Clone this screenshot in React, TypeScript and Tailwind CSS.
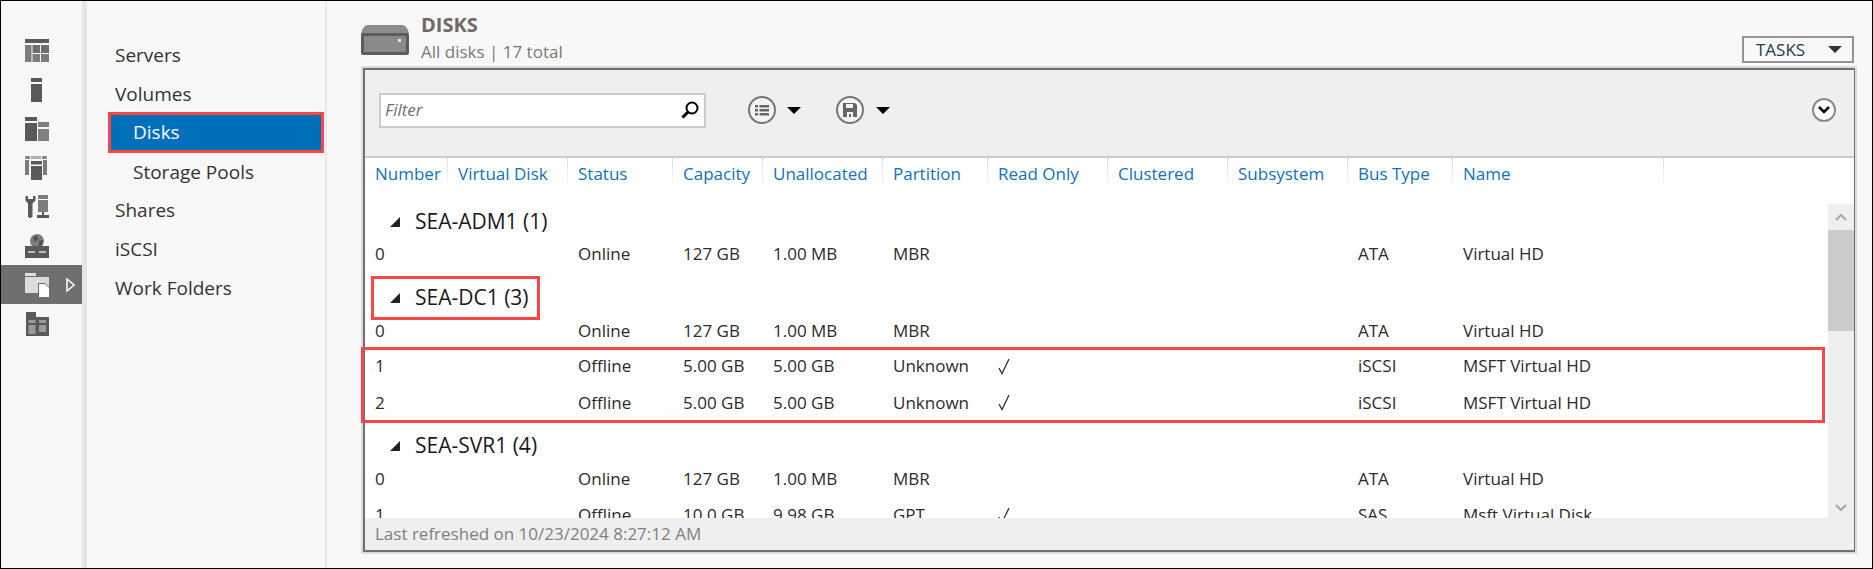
import React from 'react';

const font = { fontFamily: '"Open Sans", "Noto Sans", sans-serif' };

// Rail icons, all drawn on the 24x24 grid the originals sit on
function TableIcon() {
  return (
    <svg width="24" height="24" viewBox="0 0 24 24">
      <rect x="0" y="0" width="24" height="4" fill="#5a5a5a" />
      <rect x="0" y="6" width="6.5" height="17" fill="#7c7c7c" />
      <rect x="7.5" y="6" width="7.5" height="8" fill="#6e6e6e" />
      <rect x="16" y="6" width="8" height="8" fill="#6e6e6e" />
      <rect x="7.5" y="15" width="7.5" height="8" fill="#7c7c7c" />
      <rect x="16" y="15" width="8" height="8" fill="#7c7c7c" />
    </svg>
  );
}

function ServerIcon() {
  return (
    <svg width="24" height="24" viewBox="0 0 24 24">
      <rect x="6" y="0" width="11" height="4" fill="#5a5a5a" />
      <rect x="6" y="6" width="11" height="18" fill="#5a5a5a" />
    </svg>
  );
}

function RolesIcon() {
  return (
    <svg width="24" height="24" viewBox="0 0 24 24">
      <rect x="0" y="0" width="12" height="4" fill="#5a5a5a" />
      <rect x="0" y="6" width="12" height="18" fill="#5a5a5a" />
      <rect x="13" y="5" width="11" height="5" fill="#808080" />
      <rect x="13" y="12" width="11" height="12" fill="#808080" />
    </svg>
  );
}

function GroupIcon() {
  return (
    <svg width="24" height="24" viewBox="0 0 24 24">
      <rect x="0" y="0" width="5" height="3" fill="#8a8a8a" />
      <rect x="0" y="4" width="4" height="15" fill="#7c7c7c" />
      <rect x="17" y="0" width="5" height="3" fill="#8a8a8a" />
      <rect x="18" y="4" width="4" height="15" fill="#7c7c7c" />
      <rect x="6" y="0" width="10" height="3" fill="#b0b0b0" />
      <rect x="6" y="5" width="11" height="3.5" fill="#5a5a5a" />
      <rect x="6" y="10" width="11" height="14" fill="#5a5a5a" />
    </svg>
  );
}

function ToolsIcon() {
  return (
    <svg width="24" height="24" viewBox="0 0 24 24">
      <path d="M0.500 1 L0.500 5.500 L3 8.500 L3 21.500 Q5 24.500 7.500 21.500 L7.500 8.500 L10.500 5.500 L10.500 1 L8 1 L8 4 L3 4 L3 1 Z" fill="#5a5a5a" />
      <rect x="13" y="0" width="10" height="4" fill="#7c7c7c" />
      <rect x="13" y="5" width="10" height="12" fill="#7c7c7c" />
      <rect x="17" y="17" width="2" height="3" fill="#5a5a5a" />
      <rect x="12" y="20" width="12" height="3" fill="#5a5a5a" />
    </svg>
  );
}

function GlobeIcon() {
  return (
    <svg width="24" height="24" viewBox="0 0 24 24">
      <circle cx="12" cy="7" r="7" fill="#7c7c7c" />
      <path d="M8 3 L12 2 L13 5 L10 8 Z M14 7 L18 6 L17 11 L14 12 Z" fill="#4f4f4f" />
      <rect x="0" y="12" width="24" height="12" fill="#5a5a5a" />
      <rect x="3" y="17" width="7" height="2" fill="#bdbdbd" />
      <rect x="14" y="17" width="7" height="2" fill="#bdbdbd" />
    </svg>
  );
}

function SharesIcon() {
  return (
    <svg width="24" height="24" viewBox="0 0 24 24">
      <rect x="0" y="0" width="11" height="3" fill="#e0e0e0" />
      <rect x="0" y="4" width="24" height="16" fill="#dcdcdc" />
      <path d="M13 10 L20 10 L24 14 L24 24 L13 24 Z" fill="#6f6f6f" />
      <path d="M14 11 L20 11 L24 15 L24 24 L14 24 Z" fill="#ffffff" />
    </svg>
  );
}

function QuotaIcon() {
  return (
    <svg width="24" height="24" viewBox="0 0 24 24">
      <path d="M1 0 L11 0 L11 5 L24 5 L24 24 L1 24 Z" fill="#5a5a5a" />
      <rect x="3.500" y="8" width="7" height="3" fill="#9a9a9a" />
      <rect x="3.500" y="13" width="7" height="9" fill="#9a9a9a" />
      <rect x="14" y="8" width="7" height="3" fill="#9a9a9a" />
      <rect x="14" y="13" width="7" height="7" fill="#9a9a9a" />
    </svg>
  );
}

function DiskIcon() {
  return (
    <svg width="48" height="30" viewBox="0 0 48 30">
      <path d="M6 0 L42 0 Q47 2 48 9 L0 9 Q1 2 6 0 Z" fill="#8d8d8d" />
      <rect x="0" y="8" width="48" height="22" rx="2" fill="#5c5c5c" />
      <rect x="3" y="11" width="42" height="16" rx="1" fill="#8a8a8a" />
      <rect x="37" y="14" width="3" height="3" fill="#e6e6e6" />
    </svg>
  );
}

function Caret({ className }: { className: string }) {
  return <div className={`h-0 w-0 border-x-[7px] border-t-[7px] border-x-transparent ${className}`} />;
}

function RoundButton({ children }: { children: React.ReactNode }) {
  return (
    <div className="flex h-[28px] w-[28px] items-center justify-center rounded-full border-2 border-[#777777] bg-[#f4f4f4]">
      {children}
    </div>
  );
}

function Check() {
  return (
    <svg width="12" height="17" viewBox="0 0 12 17" fill="none" stroke="#333333" strokeWidth="1.3">
      <path d="M1 10 L4 15.500 L11 1" />
    </svg>
  );
}

const railIcons = [TableIcon, ServerIcon, RolesIcon, GroupIcon, ToolsIcon, GlobeIcon, SharesIcon, QuotaIcon];

const navItems = [
  { label: 'Servers' },
  { label: 'Volumes' },
  { label: 'Disks', sub: true, active: true },
  { label: 'Storage Pools', sub: true },
  { label: 'Shares' },
  { label: 'iSCSI' },
  { label: 'Work Folders' },
];

const columns = [
  { label: 'Number', w: 'w-[83px]' },
  { label: 'Virtual Disk', w: 'w-[120px]' },
  { label: 'Status', w: 'w-[105px]' },
  { label: 'Capacity', w: 'w-[90px]' },
  { label: 'Unallocated', w: 'w-[120px]' },
  { label: 'Partition', w: 'w-[105px]' },
  { label: 'Read Only', w: 'w-[120px]' },
  { label: 'Clustered', w: 'w-[120px]' },
  { label: 'Subsystem', w: 'w-[120px]' },
  { label: 'Bus Type', w: 'w-[105px]' },
  { label: 'Name', w: 'w-[211px]' },
];

type Disk = { num: string; status: string; cap: string; free: string; part: string; ro?: boolean; bus: string; name: string };

function DiskRow({ d, h = 'h-[36px]' }: { d: Disk; h?: string }) {
  return (
    <div className={`flex shrink-0 items-center text-[17px] text-[#2b2b2b] ${h}`}>
      <div className="w-[83px] pl-[10px]">{d.num}</div>
      <div className="w-[120px]" />
      <div className="w-[105px] pl-[10px]">{d.status}</div>
      <div className="w-[90px] pl-[10px]">{d.cap}</div>
      <div className="w-[120px] pl-[10px]">{d.free}</div>
      <div className="w-[105px] pl-[10px]">{d.part}</div>
      <div className="w-[120px] pl-[10px]">{d.ro && <Check />}</div>
      <div className="w-[120px]" />
      <div className="w-[120px]" />
      <div className="w-[105px] pl-[10px]">{d.bus}</div>
      <div className="pl-[10px]">{d.name}</div>
    </div>
  );
}

function GroupHeader({ label }: { label: string }) {
  return (
    <div className="flex h-[33px] shrink-0 items-center gap-[15px] pl-[25px] text-[21px] text-[#1a1a1a]">
      <svg width="10" height="10" viewBox="0 0 10 10">
        <path d="M10 0 L10 10 L0 10 Z" fill="#222222" />
      </svg>
      <span>{label}</span>
    </div>
  );
}

const mbr = { status: 'Online', cap: '127 GB', free: '1.00 MB', part: 'MBR', bus: 'ATA', name: 'Virtual HD' };
const iscsi = { status: 'Offline', cap: '5.00 GB', free: '5.00 GB', part: 'Unknown', ro: true, bus: 'iSCSI', name: 'MSFT Virtual HD' };

export default function App() {
  return (
    <div style={font} className="flex h-[569px] w-[1873px] overflow-hidden border border-black bg-[#f8f8f8]">
      {/* Icon rail */}
      <div className="flex w-[81px] shrink-0 flex-col pt-[30px]">
        {railIcons.map((Icon, i) => (
          <div key={i} className={`flex h-[39px] items-center pl-[24px] ${i === 6 ? 'bg-[#6f6f6f]' : ''}`}>
            <Icon />
            {i === 6 && (
              <svg className="ml-[17px]" width="9" height="14" viewBox="0 0 9 14" fill="none" stroke="#ffffff" strokeWidth="1.500">
                <path d="M1 1 L8 7 L1 13 Z" />
              </svg>
            )}
          </div>
        ))}
      </div>
      <div className="w-[5px] shrink-0 bg-[#e6e6e6]" />

      {/* Section nav */}
      <div className="flex w-[240px] shrink-0 flex-col border-r-2 border-[#e9e9e9] pt-[35px] text-[19px] text-[#333333]">
        {navItems.map((item) =>
          item.active ? (
            <div key={item.label} className="-mt-[1.4px] ml-[21px] mr-[1px] flex h-[41px] shrink-0 items-center border-[3px] border-[#fb4646] bg-[#0070bb] pl-[22px] text-white">
              {item.label}
            </div>
          ) : (
            <div key={item.label} className={`flex h-[38.6px] shrink-0 items-center ${item.sub ? 'pl-[46px]' : 'pl-[28px]'}`}>
              {item.label}
            </div>
          ),
        )}
      </div>

      {/* Main */}
      <div className="flex min-w-0 flex-1 flex-col pl-[36px] pr-[17px]">
        <div className="flex h-[67px] shrink-0 items-start">
          <div className="-ml-[2px] mt-[24px]">
            <DiskIcon />
          </div>
          <div className="ml-[12px] mt-[12px] flex-1">
            <div className="text-[20px] font-bold leading-[24px] text-[#6f6a66]">DISKS</div>
            <div className="text-[17px] leading-[30px] text-[#7a7a7a]">All disks | 17 total</div>
          </div>
          <div className="mr-[1px] mt-[35px] flex h-[27px] w-[112px] items-center border-2 border-[#949494] bg-[#f8f8f8] pl-[12px] text-[17px] text-[#2d3a4c]">
            <span className="flex-1">TASKS</span>
            <Caret className="mr-[10px] border-t-[#333333]" />
          </div>
        </div>

        {/* Panel */}
        <div className="relative flex h-[484px] flex-col border-2 border-r border-[#6f6f6f] shadow-[0_0_0_2px_#dcdcdc]">
          <div className="flex h-[86px] shrink-0 items-center bg-[#efefef] pb-[6px] pl-[14px] pr-[18px]">
            <div className="flex h-[35px] w-[327px] items-center border-2 border-[#cccccc] bg-white pl-[4px] pr-[5px]">
              <span className="flex-1 text-[17px] italic text-[#6f6f6f]">Filter</span>
              <svg width="18" height="18" viewBox="0 0 18 18" fill="none" stroke="#000000">
                <circle cx="11" cy="7" r="5.500" strokeWidth="2" />
                <path d="M7 11 L1.500 16.500" strokeWidth="3" />
              </svg>
            </div>
            <div className="ml-[42px] flex items-center gap-[11px]">
              <RoundButton>
                <svg width="14" height="13" viewBox="0 0 14 13" fill="#666666">
                  <rect x="0" y="1" width="3" height="2.500" />
                  <rect x="4.500" y="1" width="9.500" height="2.500" />
                  <rect x="0" y="5" width="3" height="2.500" />
                  <rect x="4.500" y="5" width="9.500" height="2.500" />
                  <rect x="0" y="9" width="3" height="2.500" />
                  <rect x="4.500" y="9" width="9.500" height="2.500" />
                </svg>
              </RoundButton>
              <Caret className="border-t-black" />
            </div>
            <div className="ml-[35px] flex items-center gap-[12px]">
              <RoundButton>
                <svg width="14" height="14" viewBox="0 0 14 14">
                  <path d="M0 0 L12 0 L14 2 L14 14 L0 14 Z" fill="#666666" />
                  <rect x="3" y="1" width="7" height="4" fill="#f4f4f4" />
                  <rect x="4" y="9" width="6" height="5" fill="#f4f4f4" />
                  <rect x="6" y="11" width="2" height="3" fill="#666666" />
                </svg>
              </RoundButton>
              <Caret className="border-t-black" />
            </div>
            <div className="ml-auto flex h-[24px] w-[24px] items-center justify-center rounded-full border-2 border-[#8a8a8a] bg-white">
              <svg width="12" height="8" viewBox="0 0 12 8" fill="none" stroke="#000000" strokeWidth="2.500">
                <path d="M1 1 L6 6 L11 1" />
              </svg>
            </div>
          </div>

          <div className="flex min-h-0 flex-1 flex-col border-t-2 border-[#cccccc] bg-white">
            {/* Column headers */}
            <div className="flex h-[32px] shrink-0 items-stretch text-[17px] text-[#0f72ba]">
              {columns.map((c) => (
                <div key={c.label} className={`flex items-center justify-between pl-[10px] ${c.w}`}>
                  <span>{c.label}</span>
                  <div className="w-px self-stretch bg-gradient-to-b from-[#dddddd] to-white" />
                </div>
              ))}
            </div>

            {/* Rows and scrollbar */}
            <div className="flex min-h-0 flex-1">
              <div className="min-w-0 flex-1 overflow-hidden pt-[15px]">
                <GroupHeader label="SEA-ADM1 (1)" />
                <DiskRow d={{ num: '0', ...mbr }} h="h-[32px]" />
                <div className="relative mt-[11px]">
                  <GroupHeader label="SEA-DC1 (3)" />
                  <div className="pointer-events-none absolute -top-[5px] left-[6px] h-[44px] w-[169px] border-[3px] border-[#fb4646]" />
                </div>
                <DiskRow d={{ num: '0', ...mbr }} h="h-[33px]" />
                <div className="mt-[1px]">
                  <DiskRow d={{ num: '1', ...iscsi }} />
                  <DiskRow d={{ num: '2', ...iscsi }} h="h-[37px]" />
                </div>
                <div className="mt-[8px]">
                  <GroupHeader label="SEA-SVR1 (4)" />
                </div>
                <DiskRow d={{ num: '0', ...mbr }} h="h-[34px]" />
                <div className="mt-[1px]">
                  <DiskRow d={{ num: '1', status: 'Offline', cap: '10.0 GB', free: '9.98 GB', part: 'GPT', ro: true, bus: 'SAS', name: 'Msft Virtual Disk' }} />
                </div>
              </div>
              <div className="mt-[14px] flex w-[26px] shrink-0 flex-col bg-[#efefef]">
                <div className="flex h-[26px] shrink-0 items-center justify-center">
                  <svg width="12" height="8" viewBox="0 0 12 8" fill="none" stroke="#a6a6a6" strokeWidth="2">
                    <path d="M1 7 L6 2 L11 7" />
                  </svg>
                </div>
                <div className="h-[101px] shrink-0 bg-[#cccccc]" />
                <div className="flex flex-1 items-end justify-center pb-[6px]">
                  <svg width="12" height="8" viewBox="0 0 12 8" fill="none" stroke="#a6a6a6" strokeWidth="2">
                    <path d="M1 1 L6 6 L11 1" />
                  </svg>
                </div>
              </div>
            </div>
          </div>

          <div className="flex h-[32px] shrink-0 items-center bg-[#efefef] pl-[10px] text-[17px] text-[#808080]">
            Last refreshed on 10/23/2024 8:27:12 AM
          </div>

          {/* Callout around the two offline iSCSI disks */}
          <div className="pointer-events-none absolute -left-[4px] top-[277px] h-[76px] w-[1464px] border-[3px] border-[#fb4646]" />
        </div>
      </div>
    </div>
  );
}
